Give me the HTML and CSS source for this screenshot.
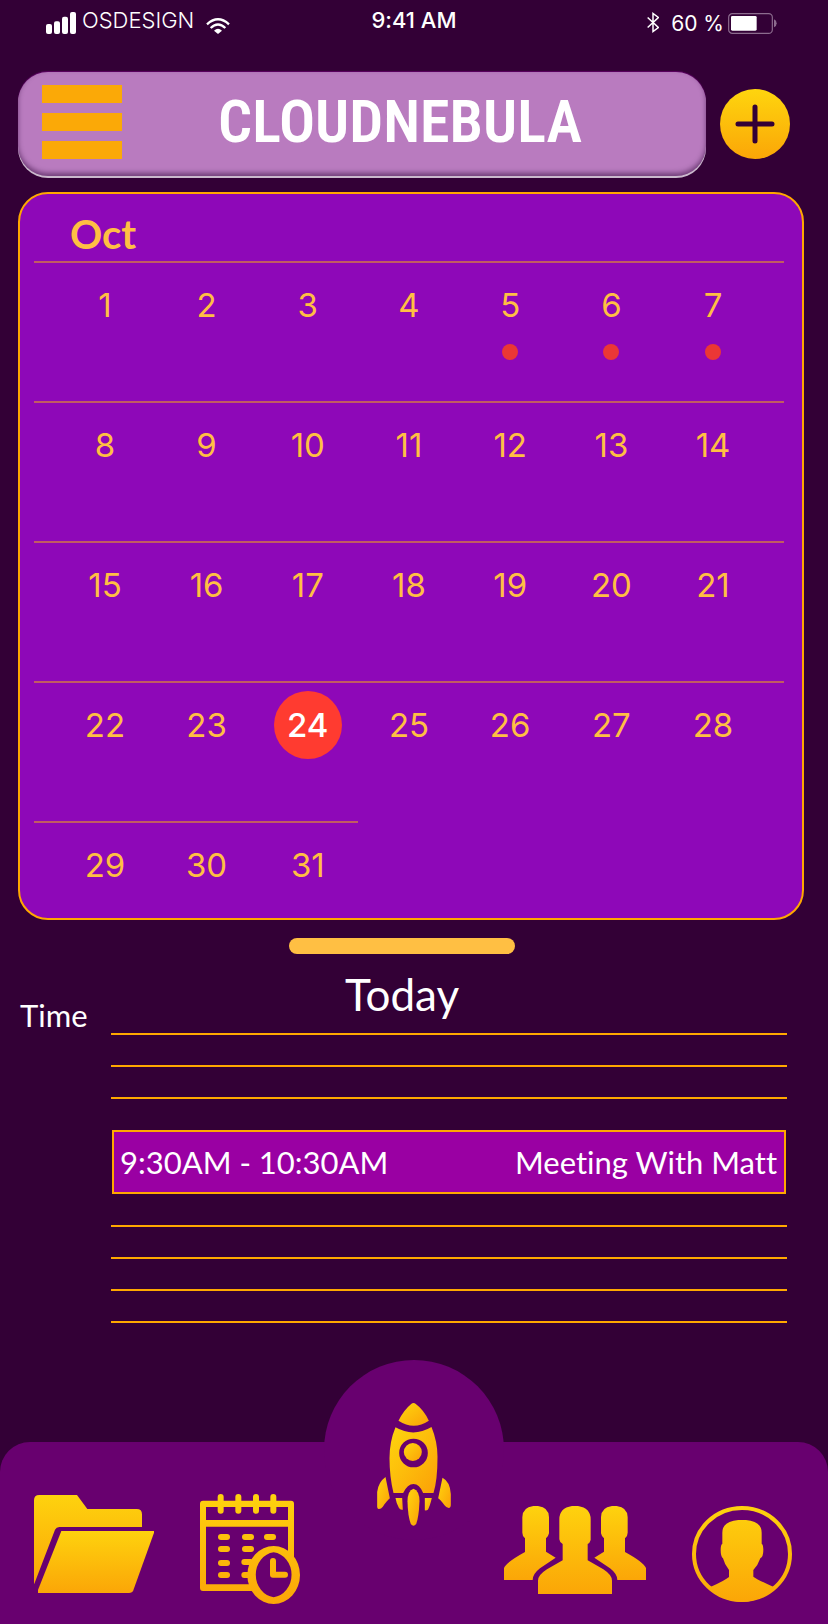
FILE: index.html
```html
<!DOCTYPE html>
<html lang="en">
<head>
<meta charset="utf-8">
<meta name="viewport" content="width=device-width, initial-scale=1">
<title>CloudNebula</title>
<link rel="stylesheet" href="styles.css">
</head>
<body>
<div class="app">
  <div class="status">
    <div class="status-left">
      <svg class="signal" viewBox="0 0 90 66" aria-hidden="true"><g fill="#fff"><rect x="0" y="36" width="18" height="30" rx="6"/><rect x="24" y="28" width="18" height="38" rx="6"/><rect x="48" y="14" width="18" height="52" rx="6"/><rect x="72" y="0" width="18" height="66" rx="6"/></g></svg>
      <span class="carrier">OSDESIGN</span>
      <svg class="wifi" viewBox="0 0 72 48" aria-hidden="true"><g fill="none" stroke="#fff" stroke-width="7"><path d="M3 19Q36-11 69 19"/><path d="M14 30Q36 9 58 30"/></g><path d="M24 38Q36 27 48 38L36 48Z" fill="#fff"/></svg>
    </div>
    <span class="clock">9:41 AM</span>
    <div class="status-right">
      <svg class="bluetooth" viewBox="0 0 36 62" aria-hidden="true"><path d="M2 16L34 46L18 58V4L34 16L2 46" fill="none" stroke="#fff" stroke-width="4.5"/></svg>
      <span class="percent">60 %</span>
      <svg class="battery" viewBox="0 0 147 63" aria-hidden="true"><rect x="2" y="2" width="131" height="59" rx="11" fill="none" stroke="#8c6b8e" stroke-width="3.5"/><rect x="9" y="9" width="77" height="44" rx="4" fill="#fff"/><path d="M138 19Q146 22 146 31T138 43Z" fill="#8c6b8e"/></svg>
    </div>
  </div>

  <header class="top">
    <div class="brand-bar">
      <button class="menu" type="button" aria-label="Menu"><span class="menu-line"></span><span class="menu-line"></span><span class="menu-line"></span></button>
      <h1 class="brand">CLOUDNEBULA</h1>
    </div>
    <button class="add" type="button" aria-label="Add event">
      <svg class="add-icon" viewBox="0 0 40 40" aria-hidden="true"><path d="M20 3V37M3 20H37" stroke="#330036" stroke-width="5" stroke-linecap="round"/></svg>
    </button>
  </header>

  <main>
    <section class="calendar">
      <h2 class="month">Oct</h2>
      <table class="days" aria-label="October">
        <colgroup><col class="edge"><col><col><col><col><col><col class="edge"></colgroup>
        <tbody>
          <tr><td><button class="day">1</button></td><td><button class="day">2</button></td><td><button class="day">3</button></td><td><button class="day">4</button></td><td><button class="day">5</button><span class="dot"></span></td><td><button class="day">6</button><span class="dot"></span></td><td><button class="day">7</button><span class="dot"></span></td></tr>
          <tr><td><button class="day">8</button></td><td><button class="day">9</button></td><td><button class="day">10</button></td><td><button class="day">11</button></td><td><button class="day">12</button></td><td><button class="day">13</button></td><td><button class="day">14</button></td></tr>
          <tr><td><button class="day">15</button></td><td><button class="day">16</button></td><td><button class="day">17</button></td><td><button class="day">18</button></td><td><button class="day">19</button></td><td><button class="day">20</button></td><td><button class="day">21</button></td></tr>
          <tr><td><button class="day">22</button></td><td><button class="day">23</button></td><td><button class="day selected" aria-current="date">24</button></td><td><button class="day">25</button></td><td><button class="day">26</button></td><td><button class="day">27</button></td><td><button class="day">28</button></td></tr>
          <tr><td><button class="day">29</button></td><td><button class="day">30</button></td><td><button class="day">31</button></td></tr>
        </tbody>
      </table>
    </section>

    <section class="agenda">
      <div class="handle"></div>
      <div class="agenda-head">
        <span class="time-label">Time</span>
        <h2 class="today">Today</h2>
      </div>
      <ul class="slots">
        <li class="slot"></li>
        <li class="slot"></li>
        <li class="slot"></li>
        <li class="event"><span>9:30AM - 10:30AM</span><span>Meeting With Matt</span></li>
        <li class="slot"></li>
        <li class="slot"></li>
        <li class="slot"></li>
        <li class="slot"></li>
      </ul>
    </section>
  </main>

  <nav class="tabs">
    <div class="tab-group">
      <a class="tab" href="#files" aria-label="Files">
        <svg class="icon-folder" viewBox="102 225 360 294">
          <defs><linearGradient id="gold-back" x1="0" y1="0" x2="0" y2="1"><stop offset="0" stop-color="#fed20e"/><stop offset="1" stop-color="#fba607"/></linearGradient></defs>
          <path fill="url(#gold-back)" d="M118 225H231L262 267H410Q426 267 426 283V321H178Q169 321 165 329L103 491H102V241Q102 225 118 225Z"/>
          <path fill="url(#gold-back)" d="M184 333H462V338L400 511Q397 519 387 519H114V510Z"/>
        </svg>
      </a>
      <a class="tab" href="#schedule" aria-label="Schedule">
        <svg class="icon-schedule" viewBox="600 222 300 330">
          <defs><linearGradient id="gold-sched" gradientUnits="userSpaceOnUse" x1="0" y1="222" x2="0" y2="552"><stop offset="0" stop-color="#fed20e"/><stop offset="1" stop-color="#fba607"/></linearGradient>
          <mask id="clock-gap" maskUnits="userSpaceOnUse" x="600" y="222" width="300" height="330"><rect x="600" y="222" width="300" height="330" fill="#fff"/><ellipse cx="821" cy="465" rx="69" ry="77" fill="#000"/></mask></defs>
          <g mask="url(#clock-gap)">
            <path fill="url(#gold-sched)" fill-rule="evenodd" d="M609 242H873Q882 242 882 251V513H609Q600 513 600 504V251Q600 242 609 242ZM618 261V300H864V261ZM618 320V493H864V320Z"/>
            <g fill="url(#gold-sched)">
              <rect x="653" y="222" width="18" height="59" rx="9"/><rect x="706" y="222" width="18" height="59" rx="9"/><rect x="759" y="222" width="18" height="59" rx="9"/><rect x="811" y="222" width="18" height="59" rx="9"/>
              <rect x="654" y="342" width="36" height="18" rx="9"/><rect x="726" y="342" width="36" height="18" rx="9"/><rect x="792" y="342" width="36" height="18" rx="9"/>
              <rect x="654" y="378" width="36" height="18" rx="9"/><rect x="726" y="378" width="36" height="18" rx="9"/>
              <rect x="654" y="420" width="36" height="18" rx="9"/><rect x="724" y="417" width="36" height="18" rx="9"/>
              <rect x="654" y="456" width="36" height="18" rx="9"/><rect x="724" y="456" width="36" height="18" rx="9"/>
            </g>
          </g>
          <path fill="url(#gold-sched)" fill-rule="evenodd" d="M821 378A79 87 0 0 1 821 552A79 87 0 0 1 821 378ZM821 397A61 68 0 0 0 821 532A61 68 0 0 0 821 397Z"/>
          <path d="M819 423V464H855" fill="none" stroke="url(#gold-sched)" stroke-width="18" stroke-linecap="round" stroke-linejoin="round"/>
        </svg>
      </a>
    </div>
    <div class="tab-group">
      <a class="tab" href="#people" aria-label="People">
        <svg class="icon-people" viewBox="42 78 426 264">
          <defs><linearGradient id="gold-side" gradientUnits="userSpaceOnUse" x1="0" y1="78" x2="0" y2="300"><stop offset="0" stop-color="#fed20e"/><stop offset="1" stop-color="#fba607"/></linearGradient><linearGradient id="gold-mid" gradientUnits="userSpaceOnUse" x1="0" y1="78" x2="0" y2="342"><stop offset="0" stop-color="#fed20e"/><stop offset="1" stop-color="#fba607"/></linearGradient></defs>
          <path fill="url(#gold-side)" d="M130 78H144Q177 82 177 112V160Q175 170 168 175V215L197 233L150 265Q128 282 128 300H42V264Q50 246 105 216V175Q97 168 97 158V112Q97 82 130 78Z"/>
          <path fill="url(#gold-side)" d="M380 78H366Q333 82 333 112V160Q335 170 342 175V215L313 233L360 265Q382 282 382 300H468V264Q460 246 405 216V175Q413 168 413 158V112Q413 82 380 78Z"/>
          <path fill="url(#gold-mid)" d="M246 78H264Q302 84 302 118V180Q299 190 293 192V241L340 268Q366 285 366 302V342H144V302Q144 285 171 268L218 241V192Q209 188 208 178V118Q208 84 246 78Z"/>
        </svg>
      </a>
      <a class="tab" href="#profile" aria-label="Profile">
        <svg class="icon-profile" viewBox="606 78 300 288">
          <defs><linearGradient id="gold-profile" gradientUnits="userSpaceOnUse" x1="0" y1="78" x2="0" y2="366"><stop offset="0" stop-color="#fed20e"/><stop offset="1" stop-color="#fba607"/></linearGradient></defs>
          <ellipse cx="756" cy="222" rx="144" ry="138" fill="none" stroke="url(#gold-profile)" stroke-width="12"/>
          <path fill="url(#gold-profile)" d="M745 120H768Q815 124 815 158V191Q820 194 820 208Q820 232 811 235Q804 256 790 270V290Q806 301 851 321Q812 366 756 366T661 321Q706 301 717 291V270Q703 252 699 235Q692 230 692 210Q692 194 697 191V158Q697 124 745 120Z"/>
        </svg>
      </a>
    </div>
    <a class="launch" href="#launch" aria-label="Launch">
      <svg class="icon-rocket" viewBox="205 189 221 369">
        <defs><linearGradient id="gold-rocket" x1="0" y1="0" x2="1" y2="1"><stop offset="0" stop-color="#fed50e"/><stop offset="0.45" stop-color="#fdbe0b"/><stop offset="1" stop-color="#fba007"/></linearGradient></defs>
        <g fill="url(#gold-rocket)">
          <path d="M307 192Q314 186 321 192Q345 210 360 242Q315 272 269 242Q285 210 307 192Z"/>
          <path fill-rule="evenodd" d="M260 262Q314 293 368 261Q386 305 386 350Q386 420 374 459H343Q332 432 314 432T283 459H254Q242 410 242 355Q242 305 260 262ZM314 296A43 43 0 0 0 314 382A43 43 0 0 0 314 296Z"/>
          <circle cx="312" cy="336" r="27"/>
          <path d="M230 411L243 475Q236 480 222 500Q216 508 209 507Q205 506 205 500V456Q208 427 230 411Z"/>
          <path d="M401 413L388 475Q395 480 407 496Q414 505 421 504Q426 502 426 496V462Q424 425 401 413Z"/>
          <path d="M260 474H280L282 509Q274 511 270 503Q263 492 260 474Z"/>
          <path d="M348 474H369Q363 500 357 509Q354 512 348 511Z"/>
          <path d="M314 446Q332 452 332 484Q330 533 322 552Q314 562 306 552Q297 530 296 484Q296 452 314 446Z"/>
        </g>
      </svg>
    </a>
  </nav>
</div>
</body>
</html>
```
FILE: styles.css
```css
* {
  box-sizing: border-box;
}

body {
  margin: 0;
  background: #330036;
  color: #fff;
  font-family: Lato, "Open Sans", sans-serif;
  font-variant-ligatures: none;
}

button {
  border: 0;
  padding: 0;
  background: none;
  color: inherit;
  font: inherit;
  cursor: pointer;
}

svg {
  display: block;
}

.app {
  display: flex;
  flex-direction: column;
  min-height: 100vh;
}

/* Status bar */
.status {
  display: grid;
  grid-template-columns: 1fr auto 1fr;
  height: 72px;
  padding-top: 7px;
  font-family: Inter, sans-serif;
  font-size: 22px;
  line-height: 26px;
}

.status-left,
.status-right {
  display: flex;
  align-items: flex-start;
}

.status-left {
  padding-left: 46px;
}

.status-right {
  justify-content: flex-end;
  padding-right: 51px;
}

.signal {
  width: 30px;
  height: 22px;
  margin-top: 5px;
}

.carrier {
  margin-left: 6px;
  font-weight: 300;
}

.wifi {
  width: 24px;
  height: 16px;
  margin: 11px 0 0 12px;
}

.clock {
  font-weight: 500;
}

.bluetooth {
  width: 12px;
  height: 21px;
  margin-top: 5px;
}

.percent {
  margin: 4px 4px 0 12px;
  font-size: 21px;
}

.battery {
  width: 49px;
  height: 21px;
  margin-top: 6px;
}

/* Header */
.top {
  display: flex;
  align-items: center;
  gap: 14px;
  padding: 0 38px 0 18px;
}

.brand-bar {
  display: flex;
  flex: 1;
  align-items: center;
  height: 104px;
  padding: 0 28px 4px 24px;
  border-radius: 30px;
  background: #b97bbf;
  box-shadow: 0 2px 0 #cbb9cd, 0 -1px 1px #5c0062, inset 0 -3px 5px rgba(40, 0, 50, 0.5);
}

.menu {
  display: flex;
  flex-direction: column;
  gap: 10px;
  width: 80px;
}

.menu-line {
  height: 18px;
  background: #fba907;
}

.brand {
  flex: 1;
  margin: 0;
  font-family: "Roboto Condensed", "Liberation Sans Narrow", sans-serif;
  font-size: 60px;
  font-weight: 600;
  line-height: 64px;
  text-align: center;
}

.add {
  display: grid;
  place-items: center;
  width: 70px;
  height: 70px;
  border-radius: 50%;
  background: linear-gradient(#fed50e, #fba607);
}

.add-icon {
  width: 40px;
  height: 40px;
}

/* Calendar */
.calendar {
  margin: 16px 24px 0 18px;
  padding: 0 18px 0 14px;
  border: 2px solid #ffa800;
  border-radius: 30px;
  background: #8e08b8;
  color: #ffbf43;
}

.month {
  margin: 0;
  padding: 13px 0 0 36px;
  font-size: 40px;
  font-weight: 700;
  line-height: 54px;
}

.days {
  width: 100%;
  border-spacing: 0;
  table-layout: fixed;
  font-family: Inter, sans-serif;
  font-size: 33px;
}

.edge {
  width: 122px;
}

.days td {
  height: 140px;
  padding: 8px 0 0;
  border-top: 2px solid #c25c62;
  text-align: center;
  vertical-align: top;
}

.days td:first-child {
  padding-left: 20px;
}

.days td:nth-child(7) {
  padding-right: 20px;
}

.days tr:last-child td {
  height: 97px;
}

.day {
  display: block;
  width: 68px;
  height: 68px;
  margin: 0 auto;
  border-radius: 50%;
}

.selected {
  background: #ff3b30;
  color: #fff;
  font-weight: 500;
}

.dot {
  display: block;
  width: 16px;
  height: 16px;
  margin: 5px auto 0;
  border-radius: 50%;
  background: #eb3735;
}

/* Agenda */
.agenda {
  padding: 18px 24px 0 0;
}

.handle {
  width: 28%;
  height: 16px;
  margin: 0 auto;
  border-radius: 8px;
  background: #ffbf43;
}

.agenda-head {
  display: grid;
  grid-template-columns: 1fr auto 1fr;
  height: 79px;
  padding: 12px 20px 0;
}

.time-label {
  align-self: end;
  font-size: 31px;
  line-height: 36px;
}

.today {
  margin: 0;
  font-size: 44px;
  font-weight: 400;
  line-height: 56px;
}

.slots {
  margin: 0 17px 80px 111px;
  padding: 0;
  list-style: none;
}

.slot {
  height: 32px;
  border-top: 2px solid #ffa800;
}

.event {
  display: flex;
  align-items: center;
  justify-content: space-between;
  height: 64px;
  margin: 1px 1px 31px;
  padding: 0 7px 0 6px;
  border: 2px solid #ffa800;
  background: #9a00a3;
  font-size: 31px;
}

/* Bottom navigation */
.tabs {
  position: relative;
  display: flex;
  justify-content: space-between;
  height: 182px;
  margin-top: auto;
  padding: 52px 36px 0 34px;
  border-radius: 30px 30px 0 0;
  background: #68006f;
}

.tab-group {
  display: flex;
  gap: 46px;
}

.launch {
  position: absolute;
  bottom: 84px;
  left: 50%;
  display: grid;
  place-items: center;
  width: 180px;
  height: 180px;
  margin-left: -90px;
  border-radius: 50%;
  background: #68006f;
}

.icon-folder {
  width: 120px;
  height: 98px;
  margin-top: 1px;
}

.icon-schedule {
  width: 100px;
  height: 110px;
}

.icon-people {
  width: 142px;
  height: 88px;
  margin-top: 12px;
}

.icon-profile {
  width: 100px;
  height: 96px;
  margin-top: 12px;
}

.icon-rocket {
  width: 74px;
  height: 123px;
  margin-top: 28px;
}
```
